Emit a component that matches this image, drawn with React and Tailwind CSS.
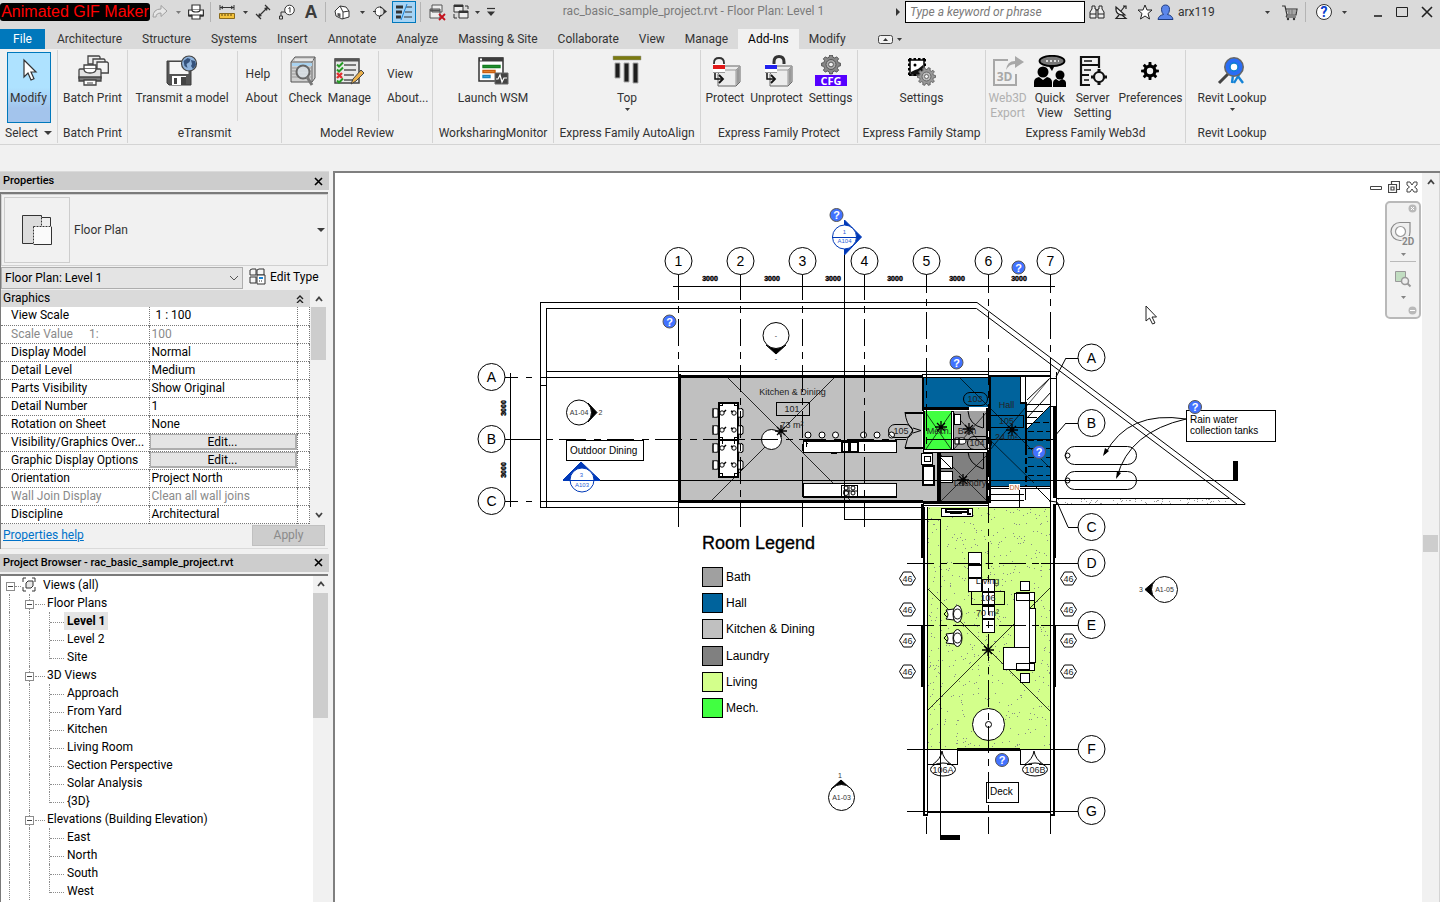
import { useState } from "react";

const TABS_LEFT = [
  "Architecture",
  "Structure",
  "Systems",
  "Insert",
  "Annotate",
  "Analyze",
  "Massing & Site",
  "Collaborate",
  "View",
  "Manage",
  "Add-Ins",
  "Modify",
];

const PROPERTIES = [
  { name: "View Scale", value: "1 : 100", indent: true },
  { name: "Scale Value", extra: "1:", value: "100", muted: true },
  { name: "Display Model", value: "Normal" },
  { name: "Detail Level", value: "Medium" },
  { name: "Parts Visibility", value: "Show Original" },
  { name: "Detail Number", value: "1" },
  { name: "Rotation on Sheet", value: "None" },
  { name: "Visibility/Graphics Over...", button: true },
  { name: "Graphic Display Options", button: true },
  { name: "Orientation", value: "Project North" },
  { name: "Wall Join Display", value: "Clean all wall joins", muted: true },
  { name: "Discipline", value: "Architectural" },
];

const TREE = [
  { name: "Floor Plans", items: ["Level 1", "Level 2", "Site"] },
  {
    name: "3D Views",
    items: ["Approach", "From Yard", "Kitchen", "Living Room", "Section Perspective", "Solar Analysis", "{3D}"],
  },
  { name: "Elevations (Building Elevation)", items: ["East", "North", "South", "West"] },
];

const LEGEND = [
  { name: "Bath", color: "#a0a0a0" },
  { name: "Hall", color: "#00639c" },
  { name: "Kitchen & Dining", color: "#c0c0c0" },
  { name: "Laundry", color: "#808080" },
  { name: "Living", color: "#d3ff8b" },
  { name: "Mech.", color: "#41ff41" },
];

/* ---------- small helpers ---------- */

const Caret = ({ wide, className = "" }) => (
  <svg viewBox="0 0 6 4" className={`shrink-0 ${wide ? "w-2 h-1" : "w-[5px] h-[3px]"} ${className}`} preserveAspectRatio="none">
    <path d="M0 0h6L3 4z" fill="#3c3c3c" />
  </svg>
);

const Icon = ({ size = 32, children }) => (
  <svg width={size} height={size} viewBox={`0 0 ${size} ${size}`} fill="none" className="shrink-0">
    {children}
  </svg>
);

const ToolButton = ({ label, className = "w-6", children }) => (
  <button aria-label={label} className={`h-6 flex items-center justify-center shrink-0 ${className}`}>
    {children}
  </button>
);

const Divider = ({ className = "mx-1" }) => <span className={`w-px h-5 bg-[#b4b4b4] shrink-0 ${className}`} />;

const gearPath = (cx, cy, outer, inner, teeth) => {
  const pts = [];
  for (let i = 0; i < teeth; i++) {
    const a = (i / teeth) * Math.PI * 2;
    const s = Math.PI / teeth;
    [
      [-0.62, inner],
      [-0.38, outer],
      [0.38, outer],
      [0.62, inner],
    ].forEach(([k, r]) => {
      pts.push(`${(cx + Math.cos(a + k * s) * r).toFixed(2)} ${(cy + Math.sin(a + k * s) * r).toFixed(2)}`);
    });
  }
  return `M${pts.join("L")}Z`;
};

/* ---------- ribbon icons ---------- */

const PointerIcon = () => (
  <Icon>
    <path d="M11 7v17l4-4 3 7 3-1.300-3-6.700h5z" fill="#fff" stroke="#333" strokeWidth="1.200" />
  </Icon>
);

const BatchPrintIcon = () => (
  <Icon>
    <g stroke="#444" strokeWidth="1.300">
      <path d="M11 9V1h11l1 1v7z" fill="#eee" />
      <path d="M16 12V4h11l1 1v8z" fill="#eee" />
      <path d="M20 18V7h10l1.300 1v10H20z" fill="#f4f4f4" />
      <path d="M7 14v-4h12v4" fill="#fff" />
      <path d="M3 14h20a1 1 0 0 1 1 1v8H2v-8a1 1 0 0 1 1-1z" fill="#e2e2e2" />
      <path d="M7 14q0 4 6 4t6-4" fill="#fff" />
      <path d="M2 22h22v4H2z" fill="#777" />
      <path d="M7 25h12v5H7z" fill="#fff" />
    </g>
    <path d="M10 28h6" stroke="#444" />
  </Icon>
);

const TransmitIcon = () => (
  <Icon>
    <path d="M1 6h24v24H3l-2-2z" fill="#555" stroke="#3c3c3c" />
    <path d="M3.500 7h19v12h-19z" fill="#f6f6f6" />
    <path d="M6 21h14v9H6z" fill="#fff" />
    <path d="M8 23h3v6H8zM15 22h5v8h-5z" fill="#444" />
    <circle cx="23" cy="8.500" r="7.500" fill="#8fb3dc" stroke="#444" strokeWidth="1.200" />
    <path d="M17.500 6l4-3 3 1-1 3-3 2 1 4-3-2zM25 5l4 1 1 4-3 4-2-3 1-2z" fill="#35527c" />
  </Icon>
);

const CheckIcon = () => (
  <Icon>
    <path d="M2 7l4-5h20v21l-3 4H2z" fill="#d0d0d0" stroke="#555" />
    <path d="M2 7h21v20M23 7l3-5" stroke="#666" />
    <path d="M3 8h20v3H3z" fill="#a9d3f0" />
    <path d="M3 13h20M3 16h20M3 19h20M3 22h20" stroke="#999" />
    <circle cx="14" cy="17" r="6.500" fill="#d9e0e6" fillOpacity=".85" stroke="#666" strokeWidth="2" />
    <path d="M18 22l5 8" stroke="#777" strokeWidth="3" />
    <path d="M6 5h18" stroke="#fff" />
  </Icon>
);

const ManageIcon = () => (
  <Icon>
    <path d="M2 4h24v24H2z" fill="#e9e9e9" stroke="#444" strokeWidth="1.500" />
    <path d="M2 3.500h24v3H2z" fill="#555" />
    <path d="M11 10h12M11 15h12M11 20h10M11 25h9" stroke="#555" strokeWidth="1.500" />
    <path d="M4 9.500l2 2 4-4M4 14.500l2 2 4-4M4 25.500l2 2 4-4" stroke="#259b25" strokeWidth="2" />
    <path d="M4 18l5 5M9 18l-5 5" stroke="#e03030" strokeWidth="2.400" />
    <path d="M18 29l2-5 8-9 3 3-8 8z" fill="#eab04c" stroke="#444" />
  </Icon>
);

const WsmIcon = () => (
  <Icon>
    <path d="M2 3h24v23H2z" fill="#fff" stroke="#333" strokeWidth="1.500" />
    <path d="M2 2.500h24v4H2z" fill="#3c3c3c" />
    <path d="M3 3.500h2v2H3z" fill="#fff" />
    <g strokeWidth="1.400" fill="none">
      <path d="M6 10.500h17v2H6z" fill="#2fa33a" stroke="#147d22" />
      <path d="M6 15.500h12v2H6z" fill="#f4a24a" stroke="#c85d10" />
      <path d="M6 20.500h7v2H6z" fill="#57b8ea" stroke="#1883bd" />
    </g>
    <path d="M18 18h13v11H18z" fill="#444" stroke="#666" />
    <path d="M19 24h2l2-4 2 7 2-4h3" stroke="#fff" strokeWidth="1.200" />
  </Icon>
);

const TopIcon = () => (
  <Icon>
    <path d="M2 1h28v4H2z" fill="#7a7a10" stroke="#999" strokeWidth=".5" />
    <path d="M4 8h5v15H4zM13 8h5v19h-5zM22 8h5v20h-5z" fill="#1e1e1e" stroke="#aaa" />
  </Icon>
);

const LockBox = ({ color, open }) => (
  <Icon>
    <path d="M12 15l4-4h15v16l-4 4H9V19z" fill="#ececec" stroke="#666" />
    <path d="M15 15h12v15M27 15l4-4" stroke="#999" />
    <path d="M27.500 15l3-3v15l-3 3z" fill="#999" />
    {open ? (
      <path d="M13 10V7q0-5.500 5-5.500T23 7v2" stroke="#333" strokeWidth="3" />
    ) : (
      <path d="M5 10V8q0-5 5-5t5 5v2" stroke="#333" strokeWidth="1.800" />
    )}
    <path d="M4 9h12v9H4z" fill="#fff" />
    <path d="M4 10h12v4H4z" fill={color} />
    <path d="M4 17.500h12" stroke="#999" />
    <path d="M6 18v6h8" stroke="#111" strokeWidth="1.500" />
    <path d="M10 20l4 4-4 4" stroke="#111" strokeWidth="1.800" />
  </Icon>
);

const CfgIcon = () => (
  <Icon>
    <path d={gearPath(16, 9.5, 9.5, 7.5, 8)} fill="#888" stroke="#555" />
    <circle cx="16" cy="9.500" r="5" stroke="#555" fill="#aaa" />
    <circle cx="16" cy="9.500" r="2.400" fill="#eee" stroke="#555" />
    <path d="M0 20h32v11H0z" fill="#5500ff" />
    <text x="16" y="30" textAnchor="middle" fontSize="11" fontWeight="700" fill="#fff" fontFamily="Open Sans, sans-serif">
      CFG
    </text>
  </Icon>
);

const StampIcon = () => (
  <Icon>
    <path d="M5 5h14v15H5z" fill="#fff" stroke="#000" strokeWidth="1.500" />
    <path d="M4 4h17M4 4v17M20 4v8M4 20h8" stroke="#000" strokeWidth="2" strokeDasharray="2.500 2" />
    <circle cx="10" cy="10" r="1.500" fill="#000" />
    <path d="M6 17l4-2 3-1 5-4v9H6z" fill="#111" />
    <path d={gearPath(21.5, 21.5, 9, 7, 10)} fill="#999" stroke="#666" />
    <circle cx="21.500" cy="21.500" r="4.500" stroke="#666" fill="#bbb" />
    <circle cx="21.500" cy="21.500" r="2" fill="#f1f1f1" stroke="#666" />
  </Icon>
);

const Web3dIcon = () => (
  <Icon>
    <path d="M16 5H2v25h22V19" stroke="#a8a8a8" strokeWidth="2" />
    <path d="M14 15q1-9 9-9V1l9 6-9 6V9q-6 0-9 6z" fill="#a8a8a8" />
    <text x="12.500" y="26" textAnchor="middle" fontSize="12" fontWeight="700" fill="#a8a8a8" fontFamily="Open Sans, sans-serif">
      3D
    </text>
  </Icon>
);

const QuickViewIcon = () => (
  <Icon>
    <ellipse cx="18" cy="6" rx="12.500" ry="5.200" fill="#777" stroke="#000" strokeWidth="1.800" />
    <path d="M14 10l4 6 3-6z" fill="#000" />
    <path d="M12 6h2M16 6h2M20 6h2M24 6h1" stroke="#fff" strokeWidth="1.500" />
    <circle cx="9" cy="17" r="5.500" fill="#000" />
    <path d="M0 32V27q0-4 5-5l4 3 4-3q5 1 5 5v5z" fill="#000" />
    <circle cx="26" cy="20" r="4.500" fill="#000" />
    <path d="M19 32v-4q0-3 3-4l3 2 3-2q4 1 4 4v4z" fill="#000" />
  </Icon>
);

const ServerIcon = () => (
  <Icon>
    <g stroke="#111" strokeWidth="2.200">
      <path d="M4 2h18v8H4zM4 10v20h9M4 20h8M22 10v3" />
      <path d="M7 6h8" strokeWidth="1.500" />
      <circle cx="22" cy="22" r="5" />
    </g>
    <path d="M22 14v3M22 27v3M14 22h3M27 22h3" stroke="#111" strokeWidth="3" />
    <path d="M7 15h7M7 25h5" stroke="#111" strokeWidth="1.500" />
  </Icon>
);

const PrefIcon = () => (
  <Icon>
    <path d={gearPath(16, 16, 9, 6.5, 8)} fill="#000" />
    <circle cx="16" cy="16" r="3.200" fill="#f1f1f1" />
  </Icon>
);

const LookupIcon = () => (
  <Icon>
    <path d="M13 18L3 28" stroke="#444" strokeWidth="3" />
    <path d="M17 20l-1 8M21 20l6 8M24 18l-6 10" stroke="#1583d6" strokeWidth="2.400" />
    <circle cx="18" cy="12" r="8.500" stroke="#666" strokeWidth="3" />
    <circle cx="18" cy="12" r="6" stroke="#2a6df5" strokeWidth="5" />
    <circle cx="18" cy="12" r="4" fill="#fff" stroke="#0b7fd0" strokeWidth="1.500" />
  </Icon>
);

/* ---------- title bar ---------- */

const TitleBar = () => (
  <header className="h-7 flex items-start bg-[#dadada] shrink-0">
    <div className="w-[150px] h-[18px] mt-[3px] rounded-[3px] bg-black text-[#ff0000] text-[16px] leading-[18px] text-center whitespace-nowrap shrink-0 font-['Liberation_Sans',sans-serif]">
      Animated GIF Maker
    </div>
    <div className="flex items-center h-6">
      <ToolButton label="Redo" className="w-5">
        <Icon size={16}>
          <path d="M1 13q0-8 8-8V1.500l6 5.500-6 5.500V9q-5 0-5 4z" fill="#e6e6e6" stroke="#a0a0a0" />
        </Icon>
      </ToolButton>
      <ToolButton label="Redo list" className="w-4">
        <Caret className="opacity-60" />
      </ToolButton>
      <ToolButton label="Print" className="w-5">
        <Icon size={16}>
          <g stroke="#333" strokeWidth="1.200">
            <path d="M4 6V1h8v5" fill="#fff" />
            <path d="M.6 6h14.800v6H.6z" fill="#fff" />
            <path d="M4 6q0 2 4 2t4-2" fill="#fff" />
            <path d="M4 11h8v4H4z" fill="#fff" />
          </g>
          <path d="M1 11.500h3M12 11.500h3" stroke="#333" strokeWidth="2" />
        </Icon>
      </ToolButton>
      <Divider />
      <ToolButton label="Measure">
        <Icon size={16}>
          <path d="M1 3.500h14M1 1v5M15 1v5M4 2L2 3.500 4 5M12 2l2 1.500L12 5" stroke="#333" />
          <path d="M.5 9.500h15v5H.5z" fill="#f5c33b" stroke="#8a6a1a" />
          <path d="M3 10v2M6 10v2M9 10v2M12 10v2" stroke="#5a4510" />
        </Icon>
      </ToolButton>
      <ToolButton label="Measure list" className="w-3">
        <Caret />
      </ToolButton>
      <ToolButton label="Aligned dimension">
        <Icon size={16}>
          <path d="M3 13L13 3M1 10l5 5M10 1l5 5" stroke="#333" strokeWidth="1.200" />
          <path d="M3 13l1-4 3 3zM13 3l-1 4-3-3z" fill="#333" />
        </Icon>
      </ToolButton>
      <ToolButton label="Tag by category">
        <Icon size={16}>
          <circle cx="10.500" cy="6" r="4.800" fill="#fff" stroke="#333" />
          <path d="M9.500 4.500l1.500-1v5M6 8H2v4M.5 12h3v3h-3z" stroke="#333" />
        </Icon>
      </ToolButton>
      <ToolButton label="Text">
        <span className="text-[18px] leading-6 font-bold text-[#3c3c3c] font-['Liberation_Sans',sans-serif]">A</span>
      </ToolButton>
      <Divider className="mx-[2px]" />
      <ToolButton label="Default 3D view" className="w-7">
        <Icon size={16}>
          <path d="M1 7l5-5 6 1 3 4v6l-7 2-6-3z" fill="#fff" stroke="#333" />
          <path d="M6 2l3 6v7M9 8l6-1" stroke="#333" />
          <path d="M3.500 9l3 .5v4l-3-1.500z" fill="#555" />
        </Icon>
      </ToolButton>
      <ToolButton label="3D view list" className="w-3">
        <Caret />
      </ToolButton>
      <ToolButton label="Section">
        <Icon size={16}>
          <circle cx="7.500" cy="7.500" r="4.500" fill="#fff" stroke="#333" />
          <path d="M8 2l7 5.500L8 13z" fill="#333" />
          <path d="M8 4v7a3.500 3.500 0 0 0 0-7z" fill="#ddd" />
          <path d="M1 7.500h3M7.500 12v3" stroke="#333" />
        </Icon>
      </ToolButton>
      <button
        aria-label="Thin lines"
        className="w-6 h-[22px] border border-[#0078bc] bg-[#a6d4f5] flex items-center justify-center shrink-0"
      >
        <Icon size={18}>
          <path d="M1 4h7M1 9h6M1 14h5" stroke="#333" strokeWidth="3" />
          <path d="M11 4h6M10 9h7M9 14h8" stroke="#333" />
          <path d="M12 1L6 17" stroke="#1883d7" />
        </Icon>
      </button>
      <Divider className="mx-1" />
      <ToolButton label="Close hidden windows" className="w-6">
        <Icon size={17}>
          <path d="M3 1h10v7H3zM1 5h10v9H1z" fill="#eee" stroke="#555" />
          <path d="M1 6.500h10" stroke="#555" strokeWidth="2" />
          <path d="M10 10l6 6M16 10l-6 6" stroke="#c4101c" strokeWidth="1.800" />
        </Icon>
      </ToolButton>
      <ToolButton label="Switch windows">
        <Icon size={16}>
          <path d="M1 1h9v7H1zM6 7h9v7H6z" fill="#eee" stroke="#333" />
          <path d="M1 2h9M6 8h9" stroke="#333" strokeWidth="2" />
          <path d="M12 2h3v3M1 10v4h3" stroke="#333" />
        </Icon>
      </ToolButton>
      <ToolButton label="Window list" className="w-2">
        <Caret />
      </ToolButton>
      <ToolButton label="Customize toolbar" className="w-5">
        <Icon size={10}>
          <path d="M1 1.500h8" stroke="#333" strokeWidth="1.200" />
          <path d="M1 4.500h8L5 9z" fill="#333" />
        </Icon>
      </ToolButton>
    </div>

    <h1 className="flex-1 text-center text-[#7a7a7a] leading-[22px] whitespace-nowrap pr-[10px]">
      rac_basic_sample_project.rvt - Floor Plan: Level 1
    </h1>

    <div className="flex items-center h-6 shrink-0">
      <svg viewBox="0 0 4 8" className="w-1 h-2 mr-[5px]">
        <path d="M0 0l4 4-4 4z" fill="#333" />
      </svg>
      <input
        aria-label="Search"
        placeholder="Type a keyword or phrase"
        className="w-[180px] h-[22px] border border-black bg-white px-1 italic placeholder:text-[#7a7a7a] outline-none"
      />
      <ToolButton label="Search">
        <Icon size={16}>
          <g stroke="#222" fill="#eee">
            <path d="M3 2h3v3h1v9H1V8l2-3zM10 2h3v3l2 3v6H9V5h1z" />
            <path d="M1 10h6M9 10h6M7 6h2" />
          </g>
        </Icon>
      </ToolButton>
      <ToolButton label="Communication center">
        <Icon size={16}>
          <path d="M3 3q-1 9 9 8z" fill="#eee" stroke="#222" strokeWidth="1.200" />
          <path d="M8 7l4-5M10 2h3v3M6 11l-3 3.500h10L9 11" stroke="#222" strokeWidth="1.200" />
        </Icon>
      </ToolButton>
      <ToolButton label="Favorites">
        <Icon size={16}>
          <path d="M8 1l2 5h5l-4 3.500 1.500 5.500L8 12l-4.500 3L5 9.500 1 6h5z" fill="#fff" stroke="#222" />
        </Icon>
      </ToolButton>
      <button className="flex items-center h-6 w-[104px] shrink-0 text-[#333]">
        <Icon size={17}>
          <path
            d="M8.500 1q4 0 4 4.500 0 3-2 5 5 1 5.500 5H1q.5-4 5.500-5-2-2-2-5Q4.500 1 8.500 1z"
            fill="#5b86ea"
            stroke="#1e3c82"
          />
        </Icon>
        <span className="pl-1">arx119</span>
      </button>
      <ToolButton label="Account list" className="w-3">
        <Caret />
      </ToolButton>
      <ToolButton label="Store" className="w-8">
        <Icon size={17}>
          <path d="M1 2h3l2 9h9l1-6H5" stroke="#333" strokeWidth="1.200" />
          <path d="M6 7h10M7 9h8M8 5v6M11 5v6" stroke="#777" />
          <path d="M6 11l-1 2h10" stroke="#333" />
          <circle cx="7" cy="15" r="1.200" fill="#333" />
          <circle cx="13" cy="15" r="1.200" fill="#333" />
        </Icon>
      </ToolButton>
      <Divider className="mr-1" />
      <ToolButton label="Help" className="w-7">
        <Icon size={18}>
          <circle cx="9" cy="9" r="7.500" fill="#fff" stroke="#333" />
          <text x="9" y="14" textAnchor="middle" fontSize="14" fontWeight="700" fill="#0a3fcf">
            ?
          </text>
        </Icon>
      </ToolButton>
      <ToolButton label="Help list" className="w-3">
        <Caret />
      </ToolButton>
      <ToolButton label="Minimize" className="ml-4 w-6">
        <Icon size={12}>
          <path d="M2 10h8" stroke="#222" strokeWidth="1.600" />
        </Icon>
      </ToolButton>
      <ToolButton label="Maximize" className="w-6">
        <Icon size={12}>
          <path d="M.5 1.500h11v9H.5z" stroke="#222" />
        </Icon>
      </ToolButton>
      <ToolButton label="Close" className="w-[26px]">
        <Icon size={12}>
          <path d="M1 1l10 10M11 1L1 11" stroke="#222" strokeWidth="1.600" />
        </Icon>
      </ToolButton>
    </div>
  </header>
);

/* ---------- ribbon ---------- */

const RibbonPanel = ({ title, className, children }) => (
  <section className={`flex flex-col border-r border-[#d4d4d4] my-px shrink-0 ${className}`}>
    <div className="h-[74px] flex justify-center">{children}</div>
    <div className="h-5 leading-5 text-center whitespace-nowrap">{title}</div>
  </section>
);

const RibbonButton = ({ lines, icon, caret, disabled, className = "px-1" }) => (
  <button
    disabled={disabled}
    className={`flex flex-col items-center pt-[5px] leading-[15px] whitespace-nowrap ${
      disabled ? "text-[#b0b0b0]" : ""
    } ${className}`}
  >
    {icon}
    <span className="pt-1">{lines[0]}</span>
    {lines[1] && <span>{lines[1]}</span>}
    {caret && <Caret className="mt-[2px]" />}
  </button>
);

const TextButtons = ({ items, className }) => (
  <div className={`flex flex-col items-start border-l border-[#d4d4d4] mt-px mb-[2px] pt-[14px] gap-[6px] ${className}`}>
    {items.map((item) => (
      <button key={item} className="h-[18px] leading-[18px]">
        {item}
      </button>
    ))}
  </div>
);

const Ribbon = () => (
  <div className="h-[96px] flex bg-[#f1f1f1] border-b border-[#d4d4d4] shrink-0 text-[#333] overflow-hidden">
    <section className="w-[58px] flex flex-col border-r border-[#d4d4d4] my-px shrink-0 items-center">
      <button className="w-11 h-[72px] mt-[2px] border border-[#0078bc] bg-linear-to-b from-[#aee2ff] from-50% to-[#a3c4ec] to-80% flex flex-col items-center leading-[15px]">
        <PointerIcon />
        <span className="pt-[6px]">Modify</span>
      </button>
      <button className="h-5 flex items-center gap-[6px]">
        Select <Caret wide />
      </button>
    </section>
    <RibbonPanel title="Batch Print" className="w-[70px]">
      <RibbonButton lines={["Batch Print"]} icon={<BatchPrintIcon />} />
    </RibbonPanel>
    <RibbonPanel title="eTransmit" className="w-[154px]">
      <RibbonButton lines={["Transmit a model"]} icon={<TransmitIcon />} />
      <TextButtons items={["Help", "About"]} className="pl-2 ml-1" />
    </RibbonPanel>
    <RibbonPanel title="Model Review" className="w-[151px]">
      <RibbonButton lines={["Check"]} icon={<CheckIcon />} className="px-[3px]" />
      <RibbonButton lines={["Manage"]} icon={<ManageIcon />} className="px-[3px]" />
      <TextButtons items={["View", "About..."]} className="pl-2 ml-1" />
    </RibbonPanel>
    <RibbonPanel title="WorksharingMonitor" className="w-[121px]">
      <RibbonButton lines={["Launch WSM"]} icon={<WsmIcon />} />
    </RibbonPanel>
    <RibbonPanel title="Express Family AutoAlign" className="w-[147px]">
      <RibbonButton lines={["Top"]} icon={<TopIcon />} caret />
    </RibbonPanel>
    <RibbonPanel title="Express Family Protect" className="w-[157px]">
      <RibbonButton lines={["Protect"]} icon={<LockBox color="#e01818" />} className="px-[3px]" />
      <RibbonButton lines={["Unprotect"]} icon={<LockBox color="#2222ee" open />} className="px-[3px]" />
      <RibbonButton lines={["Settings"]} icon={<CfgIcon />} className="px-[3px]" />
    </RibbonPanel>
    <RibbonPanel title="Express Family Stamp" className="w-[128px]">
      <RibbonButton lines={["Settings"]} icon={<StampIcon />} />
    </RibbonPanel>
    <RibbonPanel title="Express Family Web3d" className="w-[200px]">
      <RibbonButton lines={["Web3D", "Export"]} icon={<Web3dIcon />} disabled className="px-[3px]" />
      <RibbonButton lines={["Quick", "View"]} icon={<QuickViewIcon />} className="px-1" />
      <RibbonButton lines={["Server", "Setting"]} icon={<ServerIcon />} className="px-1" />
      <RibbonButton lines={["Preferences"]} icon={<PrefIcon />} className="px-[3px]" />
    </RibbonPanel>
    <section className="w-[92px] flex flex-col my-px shrink-0">
      <div className="h-[74px] flex justify-center">
        <RibbonButton lines={["Revit Lookup"]} icon={<LookupIcon />} caret />
      </div>
      <div className="h-5 leading-5 text-center">Revit Lookup</div>
    </section>
  </div>
);

/* ---------- side panels ---------- */

const PanelHeader = ({ title }) => (
  <div className="h-[18px] flex items-center justify-between bg-[#cdcdcd] pl-[3px] pr-[6px] text-[11px] leading-[18px] font-medium text-black">
    <h2>{title}</h2>
    <button aria-label={`Close ${title}`}>
      <Icon size={9}>
        <path d="M1 1l7 7M8 1L1 8" stroke="#000" strokeWidth="1.600" />
      </Icon>
    </button>
  </div>
);

const ScrollArrow = ({ down }) => (
  <svg viewBox="0 0 8 6" className="w-2 h-[6px]" fill="none">
    <path d={down ? "M1 1l3 3.500L7 1" : "M1 5l3-3.500L7 5"} stroke="#444" strokeWidth="1.800" />
  </svg>
);

const PropertiesPanel = () => {
  const [view, setView] = useState("Floor Plan: Level 1");
  return (
    <div className="pb-[5px]">
      <PanelHeader title="Properties" />
      <div className="mt-[2px] mr-[1px] border-t-2 border-l border-[#7a7a7a] text-black">
        <div className="h-[72px] flex items-center border border-[#d0d0d0] p-[2px]">
          <div className="w-[66px] h-[66px] border border-[#cdcdcd] flex items-center justify-center">
            <Icon>
              <path d="M1.500 1.500h19v28h-19z" fill="#dcdcdc" stroke="#333" />
              <path d="M20.500 3.500h9v10h-9z" fill="#eee" stroke="#333" />
              <path d="M12.500 12.500h18v18h-18z" fill="#fafafa" stroke="#333" />
              <path d="M12.500 12.500h18M12.500 12.500v18M20.500 3.500v9" stroke="#fff" />
              <path d="M12.500 12.500h18M12.500 12.500v18M20.500 3.500v9" stroke="#333" strokeDasharray="2 1" />
            </Icon>
          </div>
          <span className="flex-1 pl-1 text-[#333]">Floor Plan</span>
          <Caret wide />
        </div>
        <div className="h-6 flex items-center">
          <div className="relative w-[242px] h-[22px]">
            <select
              aria-label="View"
              value={view}
              onChange={(e) => setView(e.target.value)}
              className="appearance-none w-full h-full pl-[3px] border border-[#adadad] bg-[#e4e4e4] outline-none"
            >
              <option>Floor Plan: Level 1</option>
              <option>Floor Plan: Level 2</option>
            </select>
            <svg viewBox="0 0 10 6" className="absolute right-1 top-2 w-[10px] h-[6px] pointer-events-none" fill="none">
              <path d="M1 1l4 4 4-4" stroke="#555" />
            </svg>
          </div>
          <button className="flex items-center gap-1 pl-[6px] pb-[3px]">
            <Icon size={17}>
              <path d="M1 2l2-1h4v6H1zM8 2l2-1h5v6H8zM1 9h6v6H1z" fill="#f6f6f6" stroke="#333" />
              <path d="M8 7h8v9H8z" fill="#fff" stroke="#333" />
              <path d="M10 9h4v2h-4z" fill="#1883d7" />
              <path d="M10 13h1M12 13h1" stroke="#333" />
            </Icon>
            Edit Type
          </button>
        </div>
        <div className="flex">
          <div className="flex-1">
            <div className="h-[17px] bg-[#dadada] flex items-center justify-between pl-[2px] pr-[6px] leading-[17px]">
              Graphics
              <Icon size={8}>
                <path d="M1 4l3-3 3 3M1 8l3-3 3 3" stroke="#222" strokeWidth="1.400" />
              </Icon>
            </div>
            <table className="w-full table-fixed border-collapse bg-white leading-[17px]">
              <tbody>
                {PROPERTIES.map((row) => (
                  <tr
                    key={row.name}
                    className={`h-[18px] border-b border-dotted border-[#777] ${row.muted ? "text-[#8a8a8a]" : ""}`}
                  >
                    <th scope="row" className="w-[148px] p-0 pl-[10px] text-left font-normal whitespace-nowrap">
                      {row.name}
                      {row.extra && <span className="pl-4">{row.extra}</span>}
                    </th>
                    <td className="w-[148px] p-0 border-x border-dotted border-[#777]">
                      {row.button ? (
                        <button className="block w-full h-[16px] leading-[14px] border border-r-2 border-b-2 border-[#adadad] bg-[#e4e4e4]">
                          Edit...
                        </button>
                      ) : (
                        <span className={row.indent ? "pl-[6px]" : "pl-[2px]"}>{row.value}</span>
                      )}
                    </td>
                    <td className="p-0 border-r border-dotted border-[#777]" />
                  </tr>
                ))}
              </tbody>
            </table>
          </div>
          <div className="w-[15px] mr-[2px] ml-px bg-[#f1f1f1] flex flex-col items-center">
            <span className="h-[17px] flex items-center">
              <ScrollArrow />
            </span>
            <span className="w-full h-[53px] bg-[#cdcdcd]" />
            <span className="mt-auto h-[17px] flex items-center">
              <ScrollArrow down />
            </span>
          </div>
        </div>
        <div className="h-[25px] flex items-start justify-between pl-[2px] pr-[3px] border-b border-[#dadada]">
          <a href="#help" className="text-[#0072c9] underline leading-[23px]">
            Properties help
          </a>
          <button className="w-[73px] h-[21px] mt-px border border-[#c0c0c0] bg-[#cdcdcd] text-[#8a8a8a]">Apply</button>
        </div>
      </div>
    </div>
  );
};

const Toggle = () => (
  <button
    aria-label="Collapse"
    className="absolute -right-[5px] top-[6px] w-[9px] h-[9px] border border-[#8c8c8c] bg-white flex items-center justify-center"
  >
    <span className="w-[5px] h-px bg-[#444]" />
  </button>
);

const ProjectBrowser = () => {
  const [selected, setSelected] = useState("Level 1");
  return (
    <div className="flex-1 min-h-0 flex flex-col">
      <PanelHeader title="Project Browser - rac_basic_sample_project.rvt" />
      <div className="flex-1 min-h-0 mt-[2px] mr-[1px] border-t-2 border-l border-[#7a7a7a] bg-white flex overflow-hidden">
        <div className="flex-1 text-black leading-[18px] whitespace-nowrap">
          <div className="h-[18px] flex">
            <span className="relative w-[9px]">
              <Toggle />
            </span>
            <span className="w-[6px] ml-[5px] mt-[10px] border-t border-dotted border-[#8c8c8c]" />
            <Icon size={16}>
              <path d="M5 2H2v4M11 2h3v4M5 15H2v-4M11 15h3v-4" stroke="#333" />
              <path d="M5 7l2-2h5v5l-2 2H5z" fill="#e8e8e8" stroke="#333" />
            </Icon>
            <span className="pl-[6px]">Views (all)</span>
          </div>
          {TREE.map((group) => (
            <div key={group.name}>
              <div className="h-[18px] flex">
                <span className="w-[9px] border-r border-dotted border-[#8c8c8c]" />
                <span className="relative w-5 border-r border-dotted border-[#8c8c8c]">
                  <Toggle />
                </span>
                <span className="w-[10px] ml-[5px] mt-[10px] border-t border-dotted border-[#8c8c8c]" />
                <span className="pl-[2px]">{group.name}</span>
              </div>
              {group.items.map((item, n) => (
                <div key={item} className="h-[18px] flex">
                  <span className="w-[9px] border-r border-dotted border-[#8c8c8c]" />
                  <span className="w-5 border-r border-dotted border-[#8c8c8c]" />
                  <span
                    className={`w-5 border-r border-dotted border-[#8c8c8c] ${
                      n === group.items.length - 1 ? "h-[11px]" : ""
                    }`}
                  />
                  <span className="w-[14px] mt-[10px] border-t border-dotted border-[#8c8c8c]" />
                  <button
                    onClick={() => setSelected(item)}
                    className={`px-[3px] h-[18px] ${item === selected ? "font-bold bg-[#e4e4e4]" : ""}`}
                  >
                    {item}
                  </button>
                </div>
              ))}
            </div>
          ))}
        </div>
        <div className="w-[15px] bg-[#f1f1f1] flex flex-col items-center">
          <span className="h-[17px] flex items-center">
            <ScrollArrow />
          </span>
          <span className="w-full h-[125px] bg-[#cdcdcd]" />
        </div>
      </div>
    </div>
  );
};

/* ---------- floor plan drawing ---------- */

// fixed seed so that the carpet hatch does not jump between renders
const makeDots = (x, y, w, h, count, seed) => {
  let s = seed;
  const next = () => {
    s = (s * 16807) % 2147483647;
    return s / 2147483647;
  };
  let d = "";
  for (let i = 0; i < count; i++) {
    d += `M${Math.floor(x + next() * w)} ${Math.floor(y + next() * h)}h1v1h-1z`;
  }
  return d;
};

const CARPET = makeDots(928, 508, 122, 240, 560, 77);
const GRAVEL = makeDots(1058, 499, 170, 5, 60, 31);
const HELP_POINTS = [
  [836.5, 215],
  [1018.5, 267.5],
  [669.5, 321.5],
  [956.5, 362.5],
  [1195, 407],
  [1039, 452],
  [1002, 760],
];

const Bubble = ({ x, y, label }) => (
  <g>
    <circle cx={x} cy={y} r="13.500" fill="#fff" stroke="#000" />
    <text x={x} y={y + 5} textAnchor="middle" fontSize="14" fill="#000">
      {label}
    </text>
  </g>
);

const Dim = ({ x, y, vertical }) => (
  <text
    x={x}
    y={y}
    textAnchor="middle"
    fontSize="7"
    fontWeight="700"
    stroke="#000"
    strokeWidth=".4"
    transform={vertical ? `rotate(-90 ${x} ${y})` : undefined}
  >
    3000
  </text>
);

const Star = ({ x, y }) => (
  <path
    d={`M${x - 6} ${y}h12M${x} ${y - 6}v12M${x - 4} ${y - 4}l8 8M${x + 4} ${y - 4}l-8 8`}
    stroke="#000"
    strokeWidth="1.300"
  />
);

const Seat = ({ x, y, flip }) => (
  <g stroke="#000" fill="#fff">
    <path d={flip ? `M${x} ${y - 4}q5-1 5 1v6q0 2-5 1z` : `M${x} ${y - 4}q-5-1-5 1v6q0 2 5 1z`} />
    <path d={flip ? `M${x + 3} ${y - 5}l2 2M${x + 3} ${y + 5}l2-2` : `M${x - 5} ${y - 5}v10`} />
    <circle cx={flip ? x - 4 : x + 4} cy={y} r="2.200" />
    <path d={flip ? `M${x - 7} ${y - 2}l2 1` : `M${x + 6} ${y - 1}l2-2`} strokeWidth="1.500" />
  </g>
);

const FloorPlan = () => (
  <svg
    width="1085"
    height="729"
    viewBox="335 173 1085 729"
    fill="none"
    className="shrink-0 font-['Liberation_Sans',sans-serif]"
    role="img"
    aria-label="Floor plan of level 1"
  >
    {/* roof outline and grid dimensions */}
    <g stroke="#000" shapeRendering="crispEdges">
      <path d="M540.500 507.500V302.500H977M546.500 507V308.500H974M540.500 385.500h6M540.500 507.500H923" />
      <path d="M546.500 371.500H1050M540.500 377.500h138M540.500 501.500h138" />
      <path d="M673 286.500h382M510.500 373v134" />
      <path d="M505 377.500h13M526 377.500h6M505 501.500h13M526 501.500h6" />
      <path d="M1056 498.500h173M1056 504.500h189" />
    </g>
    <path d="M977 302.500l268.500 201.500M974 308.500h2.500L1237 504" stroke="#000" />
    <path d={GRAVEL} fill="#999" />

    {/* room fills */}
    <g shapeRendering="crispEdges">
      <path d="M678 376h246v32h-2v42h16v52H678z" fill="#c0c0c0" />
      <path d="M923 377h97v26h7v27l24-25v81H989v-79h-66z" fill="#00639c" />
      <path d="M924 411h27v38h-27z" fill="#41ff41" />
      <path d="M953 411h34v38h-34z" fill="#a0a0a0" />
      <path d="M940 453h47v48h-47z" fill="#808080" />
      <path d="M927 507h124v242H927z" fill="#d3ff8b" />
      <path d={CARPET} fill="#878f87" />
    </g>

    {/* kitchen walls */}
    <g stroke="#000" shapeRendering="crispEdges">
      <path d="M678 376h245M678 501.500h245" strokeWidth="3" />
      <path d="M679 374v129" strokeWidth="3" />
      <path d="M922.500 374.500h66v3h-66zM989 376.500h62" fill="#fff" />
      <path d="M989 376h62" strokeWidth="2" />
    </g>

    {/* room diagonals */}
    <g stroke="#000" strokeWidth=".8">
      <path d="M728 378l122 122M834 378L712 500" />
      <path d="M927 588l123 123M1050 588L927 711" />
      <path d="M960 378l30 30M990 408l60 60M1034 483L990 440M1050 378l-60 72" strokeWidth=".7" />
      <path d="M926 413l25 36M951 413l-25 36M954 413l32 36M986 413l-32 36M941 455l46 46M987 455l-46 46" strokeWidth=".7" />
    </g>

    {/* dining furniture */}
    <path d="M718.500 402.500h19v74h-19zM718 440h20" fill="#fff" stroke="#000" strokeWidth="2" shapeRendering="crispEdges" />
    <path
      d="M719 405.500h3V402M737 405.500h-3V402M719 473.500h3v3M737 473.500h-3v3M719 437.500h3v6M737 437.500h-3v6"
      stroke="#000"
      shapeRendering="crispEdges"
    />
    {[413, 430, 448, 465].map((y) => (
      <g key={y}>
        <Seat x={718} y={y} />
        <Seat x={738} y={y} flip />
      </g>
    ))}
    <g stroke="#000" fill="#fff">
      <circle cx="771.500" cy="439.500" r="10" />
      {[808, 822, 835.5, 863.5, 877, 891.5].map((x) => (
        <circle key={x} cx={x} cy="435" r="3" />
      ))}
    </g>
    <g stroke="#000" fill="#fff" shapeRendering="crispEdges">
      <path d="M803.500 440.500h93v12h-93zM803.500 483.500h93v13h-93z" />
      <path d="M803 440.500h94M803 497h94M803 483v14" strokeWidth="2" />
      <path d="M841.500 441.500h7v10h-7zM849.500 441.500h8v10h-8z" strokeWidth="2" />
      <path d="M841.500 485.500h16v11h-16z" />
      <path d="M806 442v5M806 444l2-1M831 453h6" />
    </g>
    <g stroke="#000">
      <circle cx="846" cy="488" r="2" />
      <circle cx="853" cy="488" r="2" />
      <circle cx="846" cy="493" r="2.500" />
      <circle cx="853" cy="493" r="2" />
      <path d="M849 486v10M843 491h14" />
    </g>

    {/* core: mech, bath, laundry */}
    <g stroke="#000" shapeRendering="crispEdges">
      <path d="M923 408.500h46" strokeWidth="3" />
      <path d="M986.500 408v94M989.500 377v126" strokeWidth="2" />
      <path d="M951.500 411v39h2v-39z" fill="#fff" />
      <path d="M923 449.500h64v2.500h-64z" fill="#fff" />
      <path d="M937.500 452v49M940 452v49" strokeWidth="2" />
      <path d="M923 502h66" strokeWidth="3" />
      <path d="M923 505.500h66" />
      <path d="M922.500 377v34M923.500 411v38" strokeWidth="2" />
      <path d="M905 412.500h18M905 448h18" strokeWidth="2" />
      <path d="M921.500 453.500h11v11h-11zM924.500 456.500h6v5h-6z" fill="#fff" strokeWidth="1.500" />
      <path d="M922.500 465.500h11v19h-11z" fill="#fff" strokeWidth="2" />
      <path d="M954.500 414.500h6v10h-6z" fill="#fff" />
      <path d="M940.500 456.500h12v12h-12zM940.500 471.500h12v11h-12z" fill="#fff" />
      <path d="M940 457l12 12M983 413v15M983 452v17" />
    </g>
    <g stroke="#000">
      <path d="M905 412q1 12 8 18-7 8-8 18" />
      <path d="M968 411q1 14 15 17M968 452q1 12 15 17" />
      <path d="M955 438h4v6h-4zM959 438q7-1 7 3t-7 3z" fill="#fff" />
      <rect x="888.500" y="424.500" width="24" height="13" rx="6.500" />
      <path d="M913 428l8 2.500-8 2.500" />
      <rect x="963.500" y="392.500" width="24" height="13" rx="6.500" />
      <rect x="967.500" y="436.500" width="24" height="13" rx="6.500" />
      <rect x="990.500" y="415.500" width="33" height="12" />
      <rect x="776.500" y="402.500" width="33" height="13" />
    </g>

    {/* stair */}
    <g stroke="#000" shapeRendering="crispEdges">
      <path d="M1020.500 377v26h5V377M1026 402v53" strokeWidth="1.500" />
      <path d="M1026 404.500h24M1026 411.500h17M1026 417.500h11M1026 423.500h6" />
      <path d="M1026 431v55" strokeWidth="2" strokeDasharray="6 3" />
      <path
        d="M1034 422.500h17M1028 431.500h23M1028 440.500h23M1028 448.500h23M1028 457.500h23M1028 466.500h23M1028 475.500h23"
        strokeDasharray="6 3"
      />
      <path d="M989 486.500h62M989 488.500h62" strokeWidth="1.500" />
      <path d="M989 494.500h35M989 500.500h35M1019.500 488v19M1025.500 488v12M989 507h62" />
    </g>
    <path d="M1027 400l22-21M1027 418l24-26M1026 430l24-24M1036 487l14 14" stroke="#000" />

    {/* exterior walls of the living wing */}
    <g stroke="#000" shapeRendering="crispEdges">
      <path d="M1050.500 377v440M1056.500 372v132" />
      <path d="M1054 406v92M1054 504v54" strokeWidth="3" />
      <path d="M1050 378h6M1050 406h4" />
      <path d="M922 504v54M922.500 625v62M1054.500 625v62" strokeWidth="3" />
      <path d="M923.500 507v308h4v-308M1050.500 507v308h4V507" strokeWidth="1.500" />
      <path d="M924 507v308M1054 507v308" strokeWidth="2" />
      <path d="M957 749.500h63" strokeWidth="3" />
      <path d="M927 811.500h124" strokeWidth="2" />
      <path d="M927.500 749v15.500h12M957.500 749v15h-11M1020.500 749v15h11M1050.500 764.500h-12" />
    </g>
    <path d="M942 751q-1 8-10 14M942 751q1 8 10 14M1034 751q-1 8-10 14M1034 751q1 8 10 14" stroke="#000" />

    {/* living room furniture */}
    <g stroke="#000" fill="#fff" shapeRendering="crispEdges">
      <path d="M941.500 508.500h31v8h-31z" />
      <path d="M946 509h22v3h-22zM950 512.500h12M967 514h4" strokeWidth="2" />
      <path d="M968.500 552.500h13v12h-13zM968.500 565.500h13v12h-13zM968.500 578.500h13v13h-13zM982.500 579.500h12v12h-12zM982.500 592.500h12v13h-12zM982.500 606.500h12v12h-12zM982.500 619.500h12v13h-12z" />
      <path d="M1014.500 593.500h15v54h-15zM1016.500 592.500h18v8h-18zM1029.500 608.500h6v54h-6zM1029.500 601v7M1034.500 601v7" />
      <path d="M1003.500 647.500h26v22h-26zM1016.500 663.500h18v7h-18z" />
      <path d="M1020.500 581.500h9v9h-9zM1020.500 673.500h9v9h-9z" />
      <path d="M971.500 591.500h33v13h-33z" fill="none" />
    </g>
    <g stroke="#000" fill="#fff">
      <circle cx="988.500" cy="724.500" r="16" />
      <circle cx="988.500" cy="724.500" r="3" />
      {[614, 638].map((y) => (
        <g key={y}>
          <path d={`M946 ${y - 4}l8-1v11l-8-1q4-4 0-9z`} />
          <ellipse cx="957.500" cy={y} rx="4.500" ry="8.500" />
          <ellipse cx="957.500" cy={y} rx="4" ry="5" />
          <path d={`M944 ${y}l3-3M944 ${y}l3 3`} />
        </g>
      ))}
    </g>

    {/* grid lines */}
    <g stroke="#000" shapeRendering="crispEdges">
      <path d="M678.500 273V376M740.500 273V502M802.500 273V502M864.500 273V502" strokeDasharray="27 6 7 6" />
      <path d="M926.500 273V449M988.500 273V834M1050.500 273V376" strokeDasharray="27 6 7 6" strokeDashoffset="7" />
      <path d="M678.500 502v25M740.500 502v25M802.500 502v25M864.500 502v25M926.500 817v17M988.500 817v17M1050.500 817v17" />
      <path d="M505 439.500h36M547 439.500h6" />
      <path d="M558.500 439.500H906" strokeDasharray="27 8 7 6" />
      <path d="M926 439.500h128" />
      <path d="M907 563.500h134M907 625.500h134" strokeDasharray="27 6 7 6" />
      <path d="M1041 563.500h37M1041 625.500h37" />
      <path d="M907 749.500h50M1020 749.500h58M907 811.500h20M1050 811.500h28" />
      <path d="M844.500 250v269h96v318M599 480.500h638" />
      <path d="M940 835h20v5h-20zM1233 461h5v20h-5z" fill="#000" stroke="none" />
      <path d="M1078 358.500h-12M1078 423.500h-12M1078 527.500h-10" />
    </g>
    <path d="M1066 358l-10 19M1066 423l-12 14M1068 527l-11-25-8-1" stroke="#000" />

    {/* grid bubbles */}
    {[1, 2, 3, 4, 5, 6, 7].map((n) => (
      <Bubble key={n} x={616.5 + n * 62} y={261} label={n} />
    ))}
    {["A", "B", "C"].map((l, i) => (
      <Bubble key={l} x={491.5} y={377 + i * 62} label={l} />
    ))}
    {[
      ["A", 357.5],
      ["B", 423],
      ["C", 527],
      ["D", 563],
      ["E", 625],
      ["F", 749],
      ["G", 811],
    ].map(([l, y]) => (
      <Bubble key={l} x={1091.5} y={y} label={l} />
    ))}
    <g fill="#000">
      {[710, 772, 833, 895, 957, 1019].map((x) => (
        <Dim key={x} x={x} y={281} />
      ))}
      <Dim x={506} y={408} vertical />
      <Dim x={506} y={470} vertical />
    </g>

    {/* view markers */}
    <g stroke="#000">
      <path d="M766 345h20l-10 9z" fill="#000" />
      <circle cx="776" cy="335.500" r="13" fill="#fff" />
      <path d="M588 403v19l9-9.500z" fill="#000" />
      <circle cx="579" cy="412.500" r="12.500" fill="#fff" />
      <path d="M1156 580v19l-11-9.500z" fill="#000" />
      <circle cx="1164.500" cy="589.500" r="13" fill="#fff" />
      <path d="M831 789h20l-10-9z" fill="#000" />
      <circle cx="841.500" cy="797.500" r="13" fill="#fff" />
    </g>
    <g stroke="#0039b8">
      <path d="M563 480l18-18 19 18z" fill="#0039b8" />
      <circle cx="582" cy="480" r="12" fill="#fff" />
      <path d="M563 480.500h37" />
      <path d="M844.500 220v35l17-18z" fill="#0039b8" />
      <circle cx="844.500" cy="237" r="12" fill="#fff" />
      <path d="M832 237.500h28" />
    </g>
    <g fill="#2a5fd8" fontSize="6" textAnchor="middle">
      <text x="581.500" y="477">3</text>
      <text x="582" y="487">A103</text>
      <text x="844.500" y="234">1</text>
      <text x="844.500" y="243">A104</text>
    </g>
    <g fill="#333" fontSize="7" textAnchor="middle">
      <text x="776" y="338">-</text>
      <text x="776" y="361">-</text>
      <text x="579" y="415">A1-04</text>
      <text x="600.500" y="415">2</text>
      <text x="1164.500" y="592">A1-05</text>
      <text x="1141" y="592">3</text>
      <text x="841.500" y="800">A1-03</text>
      <text x="840" y="778">1</text>
    </g>

    {/* window tags */}
    {[578.5, 609.5, 640.5, 671.5].map((y) =>
      [907.5, 1068.5].map((x) => (
        <g key={`${x}-${y}`}>
          <path d={`M${x - 8} ${y}l4-6.500h8l4 6.500-4 6.500h-8z`} fill="#fff" stroke="#000" />
          <text x={x} y={y + 3} textAnchor="middle" fontSize="9" fill="#222">
            46
          </text>
        </g>
      ))
    )}
    <g stroke="#000">
      <ellipse cx="943" cy="769.500" rx="12.500" ry="6.500" />
      <ellipse cx="1035" cy="769.500" rx="12.500" ry="6.500" />
    </g>

    {/* room centers and tags */}
    <Star x={781} y={431} />
    <Star x={941} y={427} />
    <Star x={969} y={429} />
    <Star x={963} y={480} />
    <Star x={1012} y={430} />
    <Star x={988} y={650} />
    <g fill="#222" fontSize="9" textAnchor="middle">
      <text x="792.500" y="395">Kitchen &amp; Dining</text>
      <text x="792" y="412">101</text>
      <text x="792" y="428">73 m²</text>
      <text x="901" y="434">105</text>
      <text x="975" y="402">103</text>
      <text x="977" y="446">104</text>
      <text x="1006.500" y="408">Hall</text>
      <text x="1006.500" y="424">105</text>
      <text x="1006.500" y="440">24 m²</text>
      <text x="939" y="434">Mech.</text>
      <text x="967" y="434">Bath</text>
      <text x="970" y="486">Laundry</text>
      <text x="987.500" y="584">Living</text>
      <text x="988" y="601">106</text>
      <text x="987.500" y="616">70 m²</text>
      <text x="943" y="773">106A</text>
      <text x="1035" y="773">106B</text>
    </g>
    <path d="M1009 484h11v6h-11z" fill="#fff" />
    <text x="1014.500" y="490" textAnchor="middle" fontSize="7" fill="#c2601c">
      DN
    </text>

    {/* rain water tanks */}
    <g stroke="#000">
      <rect x="1065.500" y="446.500" width="71" height="18" rx="9" />
      <rect x="1065.500" y="471.500" width="71" height="18" rx="9" />
      <circle cx="1067.500" cy="455.500" r="2.500" />
      <circle cx="1067.500" cy="480.500" r="2.500" />
      <path d="M1186 419q-58-9-81 35M1186 419q-57 13-69 58" />
    </g>
    <path d="M1103 456l2-8 4 3zM1116 479l1-8 4 2z" fill="#000" />

    {/* notes */}
    <g stroke="#000" fill="#fff" shapeRendering="crispEdges">
      <path d="M566.500 440.500h77v20h-77zM1186.500 410.500h89v31h-89z" />
      <path d="M986.500 782.500h32v20h-32z" fill="none" />
    </g>
    <g fill="#000" fontSize="10">
      <text x="570" y="454">Outdoor Dining</text>
      <text x="1190" y="423">Rain water</text>
      <text x="1190" y="434">collection tanks</text>
      <text x="990" y="795">Deck</text>
    </g>

    {/* legend */}
    <text x="702" y="549" fontSize="18" fill="#000" stroke="#000" strokeWidth=".3">
      Room Legend
    </text>
    {LEGEND.map((item, i) => (
      <g key={item.name}>
        <rect
          x="702.500"
          y={567.5 + Math.round(i * 26.2)}
          width="20"
          height="19"
          fill={item.color}
          stroke="#000"
          shapeRendering="crispEdges"
        />
        <text x="726" y={581 + Math.round(i * 26.2)} fontSize="12" fill="#000">
          {item.name}
        </text>
      </g>
    ))}

    {HELP_POINTS.map(([x, y]) => (
      <g key={x}>
        <circle cx={x} cy={y} r="6.500" fill="#4272ff" stroke="#555" />
        <text x={x} y={y + 4} textAnchor="middle" fontSize="11" fontWeight="700" fill="#fff">
          ?
        </text>
      </g>
    ))}

    {/* mouse pointer */}
    <path d="M1146 306v15l3.500-3 3 6 2.500-1-3-6h4.500z" fill="#fff" stroke="#222" />
  </svg>
);

const NavigationBar = () => (
  <div className="absolute right-px top-[28px] w-9 h-[118px] rounded-[5px] border-2 border-[#b9b9b9] bg-[#f1f1f1] flex flex-col items-center">
    <button aria-label="Close navigation bar" className="self-end mt-px mr-[2px]">
      <Icon size={9}>
        <circle cx="4.500" cy="4.500" r="4" fill="#b9b9b9" />
        <path d="M3 3l3 3M6 3L3 6" stroke="#fff" />
      </Icon>
    </button>
    <button aria-label="Steering wheels" className="mt-2">
      <Icon size={26}>
        <path d="M10 1.500h10V11q0 8.500-9 8.500h-1a9 9 0 1 1 0-18z" fill="#eee" stroke="#8a8a8a" strokeWidth="1.200" />
        <circle cx="10.500" cy="10.500" r="5" fill="#fff" stroke="#999" strokeWidth="1.200" />
        <text x="12" y="24" fontSize="10" fontWeight="700" fill="#888" stroke="#f1f1f1" strokeWidth="2" paintOrder="stroke">
          2D
        </text>
      </Icon>
    </button>
    <Caret className="mt-[6px] opacity-60" />
    <span className="w-[26px] h-px bg-[#b9b9b9] mt-[5px]" />
    <button aria-label="Zoom" className="mt-2">
      <Icon size={18}>
        <path d="M1.500 1.500h10v10h-10z" fill="#c1ddc1" stroke="#999" />
        <circle cx="11" cy="11" r="3.500" fill="#eee" stroke="#999" strokeWidth="1.500" />
        <path d="M13.500 13.500l3 3" stroke="#999" strokeWidth="2" />
      </Icon>
    </button>
    <Caret className="mt-2 opacity-60" />
    <button aria-label="Navigation options" className="self-end mt-auto mb-[2px] mr-[2px]">
      <Icon size={9}>
        <circle cx="4.500" cy="4.500" r="4" fill="#b9b9b9" />
        <path d="M2 4.500h5" stroke="#fff" />
      </Icon>
    </button>
  </div>
);

const Canvas = () => (
  <main className="flex-1 min-w-0 border-l-2 border-t-2 border-[#7f7f7f] bg-white flex">
    <div className="relative flex-1 min-w-0 overflow-hidden">
      <FloorPlan />
      <div className="absolute right-1 top-2 flex items-center gap-[6px]">
        <button aria-label="Minimize view">
          <Icon size={12}>
            <path d="M.5 5.500h11v3H.5z" fill="#fff" stroke="#444" />
          </Icon>
        </button>
        <button aria-label="Restore view">
          <Icon size={12}>
            <path d="M3.500 3V.5h8v8H9M.5 3.500h8v8h-8zM3 6h3v3H3z" stroke="#444" strokeWidth="1.200" />
          </Icon>
        </button>
        <button aria-label="Close view">
          <Icon size={12}>
            <path d="M1 1h3l2 3 2-3h3v3L8.500 6 11 8v3H8L6 8l-2 3H1V8l2.500-2L1 4z" fill="#fff" stroke="#444" />
          </Icon>
        </button>
      </div>
      <NavigationBar />
    </div>
    <div className="w-[17px] bg-[#f1f1f1] flex flex-col items-center">
      <span className="h-[18px] flex items-center">
        <ScrollArrow />
      </span>
      <span className="w-[15px] h-[17px] mt-[344px] bg-[#cdcdcd]" />
    </div>
    <div className="w-px bg-[#d4d4d4]" />
  </main>
);

export default function App() {
  const [tab, setTab] = useState("Add-Ins");
  return (
    <div className="h-screen flex flex-col overflow-hidden bg-[#f1f1f1] text-[12px] text-[#333] font-['Roboto','Open_Sans',sans-serif]">
      <TitleBar />
      <nav className="h-[21px] pt-px flex bg-[#dadada] shrink-0 leading-5">
        <button className="w-[45px] h-5 mr-[2px] bg-[#0078bc] text-white">File</button>
        {TABS_LEFT.map((name) => (
          <button
            key={name}
            onClick={() => setTab(name)}
            className={`h-5 px-[10px] whitespace-nowrap ${name === tab ? "bg-[#f1f1f1] text-black" : ""}`}
          >
            {name}
          </button>
        ))}
        <button aria-label="Minimize ribbon" className="flex items-center gap-1 pl-[22px]">
          <Icon size={15}>
            <rect x=".5" y="3.500" width="14" height="8" rx="2" fill="#f1f1f1" stroke="#444" />
            <path d="M5 9l2.500-3L10 9z" fill="#333" />
          </Icon>
          <Caret />
        </button>
      </nav>
      <Ribbon />
      <div className="h-[26px] shrink-0" />
      <div className="flex-1 min-h-0 flex">
        <aside className="w-[329px] shrink-0 flex flex-col border-t border-[#dadada]">
          <PropertiesPanel />
          <ProjectBrowser />
        </aside>
        <div className="w-1 shrink-0" />
        <Canvas />
      </div>
    </div>
  );
}
